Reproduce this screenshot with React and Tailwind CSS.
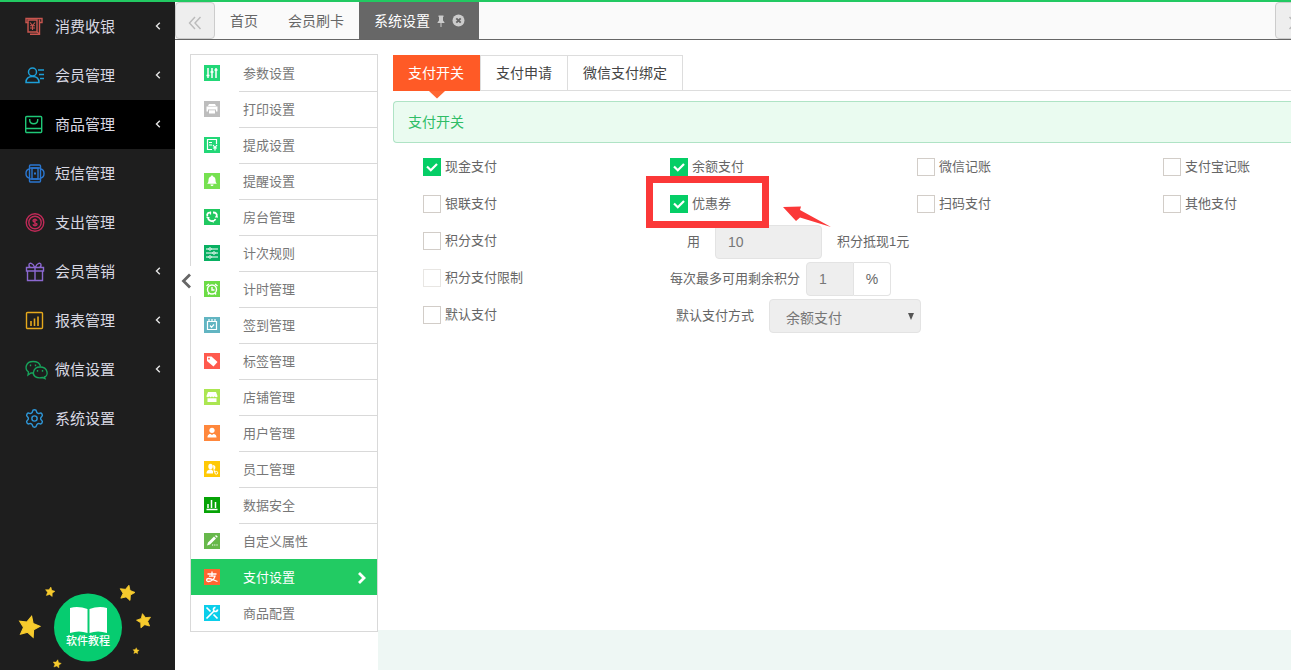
import React, { useState } from 'react';
import clsx from 'clsx';
import { Settings } from 'lucide-react';

const line = { fill: 'none', stroke: 'currentColor', strokeWidth: 1.4 };

const NAV_ITEMS = [
  {
    label: '消费收银',
    color: 'text-[#c9564f]',
    arrow: true,
    icon: (
      <g {...line}>
        <path d="M3.5 5.5H1v-4h16v4h-2" />
        <path d="M3 3h9v12H3zM14.5 2.500v14.800H5" />
        <path d="M12 15l2.500 2" />
        <path d="M5 5.500l2.500 3L10 5.500M7.500 8.500V13M5 8.800h5M5 11h5" strokeWidth="1.100" />
      </g>
    ),
  },
  {
    label: '会员管理',
    color: 'text-[#1d9fd8]',
    arrow: true,
    icon: (
      <g {...line} strokeWidth={1.5}>
        <circle cx="7.5" cy="6" r="4" />
        <path d="M1 16.5c0-4 2-6 6.5-6s6.500 2 6.500 6zM13 4h6M14 8.500h5M15 12.500h4" />
      </g>
    ),
  },
  {
    label: '商品管理',
    color: 'text-[#1fc777]',
    arrow: true,
    icon: (
      <g {...line}>
        <rect x="0.7" y="1.5" width="16" height="16" rx="1" />
        <path d="M1 13.5h16M4.700 4v1c0 5 8 5 8 0V4" />
      </g>
    ),
  },
  {
    label: '短信管理',
    color: 'text-[#2a76cf]',
    icon: (
      <g {...line}>
        <rect x="4.5" y="1" width="11" height="17" rx="1" />
        <rect x="7" y="4" width="6" height="11" />
        <path d="M5 4h10M5 15h10M4 5C0 6 0 13 4 14M16 5c4 1 4 8 0 9" />
        <path d="M10 8.5v2" strokeWidth="2" />
      </g>
    ),
  },
  {
    label: '支出管理',
    color: 'text-[#c02a58]',
    icon: (
      <g {...line}>
        <circle cx="10" cy="9.5" r="8.8" />
        <circle cx="10" cy="9.5" r="6.2" />
        <path d="M12 7.700c-.5-1.700-4-1.700-4 0s4 1.700 4 3.500-3.500 1.800-4 0M10 5.500v8" />
      </g>
    ),
  },
  {
    label: '会员营销',
    color: 'text-[#8b68d0]',
    arrow: true,
    icon: (
      <g {...line}>
        <path d="M1.500 5.500h17v3.500h-17zM2.500 9v9.500h15V9M10 5.500v13M9.500 5C8 1 4 0 4 3c0 1.500 1 2.500 2 2.500M10.500 5C12 1 16 0 16 3c0 1.500-1 2.500-2 2.500" />
      </g>
    ),
  },
  {
    label: '报表管理',
    color: 'text-[#e6a91c]',
    arrow: true,
    icon: (
      <g {...line}>
        <rect x="1.5" y="1.5" width="16" height="16" rx="1" />
        <path d="M6 10v5M9.500 7.500V15M13 5.500V15" strokeWidth="1.6" />
      </g>
    ),
  },
  {
    label: '微信设置',
    color: 'text-[#17a35b]',
    arrow: true,
    icon: (
      <g {...line}>
        <path d="M8 13H6l-3 2 .5-3C-1 8.500 1 1.500 8 1.500c4 0 7 2 7.500 5" />
        <path d="M15 7c8.500 0 8.500 9 4.500 10l.5 1.500-2.500-1C11 19 7.500 15.500 8.500 12c.6-3 3-5 6.500-5z" />
        <path d="M5.500 4.500v1.800M10.500 4.500v1.800M12.500 10v1.800M17.500 10v1.800" />
      </g>
    ),
  },
  {
    label: '系统设置',
    color: 'text-[#2e97d8]',
    icon: <Settings x={-1} y={-1} size={21} strokeWidth={1.6} />,
  },
];

const MENU_ITEMS = [
  {
    label: '参数设置',
    bg: 'bg-[#22d777]',
    icon: <path d="M4 3v10M8 3v10M12 3v10M2.500 10.500h3M6.500 7h3M10.500 5h3" stroke="#fff" strokeWidth="1.5" />,
  },
  {
    label: '打印设置',
    bg: 'bg-[#bdbdbd]',
    icon: (
      <g fill="#fff">
        <path d="M5 3h6l1 2H4zM2.500 5.500h11V10.500H12V8.500H4v2H2.500z" />
        <path d="M5 9.300h6V12.500H5z" />
      </g>
    ),
  },
  {
    label: '提成设置',
    bg: 'bg-[#22d777]',
    icon: (
      <g fill="none" stroke="#fff" strokeWidth="1.2">
        <path d="M12.500 7V2.500h-9v10H8M5 5.500h3M5 8h3M9 8l2 2.500L13 8M11 10v3.500M9 11h4" />
      </g>
    ),
  },
  {
    label: '提醒设置',
    bg: 'bg-[#76e150]',
    icon: <path d="M8 2.500c.8 0 1 .5 1 1 2 .5 2.500 2 2.500 3.500 0 2 .5 3 1.500 3.800H3C4 10 4.500 9 4.500 7c0-1.500.5-3 2.500-3.500 0-.5.2-1 1-1zM6.500 11.500h3c0 2-3 2-3 0z" fill="#fff" />,
  },
  {
    label: '房台管理',
    bg: 'bg-[#20c860]',
    icon: (
      <g fill="none" stroke="#fff" strokeWidth="1.8">
        <path d="M7 4C4 3 2.500 5 3.500 7.500M4 9c1 3.500 6 4.500 7.500 1M12.500 8C13.500 5 12 3.500 9 3.500" />
        <path d="M6.500 2.500v3M2.500 8.500h3M11 8h3M8.500 11.500l1 2" strokeWidth="1.2" />
      </g>
    ),
  },
  {
    label: '计次规则',
    bg: 'bg-[#08b062]',
    icon: (
      <g stroke="#fff" fill="#08b062">
        <path d="M2 4h12M2 8h12M2 12h12" />
        <circle cx="6" cy="4" r="1.2" />
        <circle cx="10" cy="8" r="1.2" />
        <circle cx="6" cy="12" r="1.2" />
      </g>
    ),
  },
  {
    label: '计时管理',
    bg: 'bg-[#6cdc46]',
    icon: (
      <g fill="none" stroke="#fff" strokeWidth="1.4">
        <circle cx="8" cy="8.5" r="4.5" />
        <path d="M8 6v3h2.500M2.500 5l2.500-2M13.500 5L11 3M5 12l-1 1.500M11 12l1 1.500" />
      </g>
    ),
  },
  {
    label: '签到管理',
    bg: 'bg-[#62b5c2]',
    icon: (
      <g fill="none" stroke="#fff" strokeWidth="1.2">
        <path d="M3.500 4.500h9v8h-9zM3 4.500h10M5 2v3M8 2v3M11 2v3M6 8.500l1.500 1.800L10 7.500" />
      </g>
    ),
  },
  {
    label: '标签管理',
    bg: 'bg-[#ff5a4e]',
    icon: <path fillRule="evenodd" d="M3 3.500h4.500l6 5.500-4 4.500L3 8zM5 4.800a.9.9 0 100 1.800.9.9 0 000-1.800z" fill="#fff" />,
  },
  {
    label: '店铺管理',
    bg: 'bg-[#abe651]',
    icon: <path d="M4 3h8l1.500 4c0 1.500-2 1.500-2.800.3-.7 1.200-2 1.200-2.700 0-.7 1.200-2 1.200-2.700 0C4.500 8.500 2.500 8.500 2.500 7zM3.500 9.300h9V13h-9z" fill="#fff" />,
  },
  {
    label: '用户管理',
    bg: 'bg-[#ff873c]',
    icon: (
      <g fill="#fff">
        <circle cx="8" cy="5.3" r="2.6" />
        <path d="M3.500 12.500c0-3 2-3.500 3-3.500l1.500 1L9.500 9c1 0 3 .5 3 3.500z" />
      </g>
    ),
  },
  {
    label: '员工管理',
    bg: 'bg-[#ffc905]',
    icon: (
      <g fill="#fff">
        <ellipse cx="6.5" cy="5.5" rx="2.2" ry="2.8" />
        <path d="M2.500 12.500c0-3 2-3.500 3-4h2l1.500 1.500v2.500zM9 4c3 0 3 4 1 5l1.500 1-1.500 2" />
        <circle cx="12.3" cy="11.8" r="1.4" fill="none" stroke="#fff" />
      </g>
    ),
  },
  {
    label: '数据安全',
    bg: 'bg-[#06a306]',
    icon: <path d="M4 7v4M7.500 3v8M11.500 5v6M2.500 12.500h11" stroke="#fff" strokeWidth="1.5" />,
  },
  {
    label: '自定义属性',
    bg: 'bg-[#67b84b]',
    icon: <path d="M3 12.500l1-3 6-6 2 2-6 6zM11 3l1-1 1.800 1.800-1 1zM8 11.500h1.200v1H8zM10.200 11.500h1.200v1h-1.200zM12.400 11.500h1.200v1h-1.200z" fill="#fff" />,
  },
  {
    label: '支付设置',
    bg: 'bg-[#ff6631]',
    icon: <path d="M3.500 5h9M8 2.500V7M5 7.200h6C10 10.500 7 12.500 4.500 12.500c-2.500 0-2.500-3 0-3 3 0 6 2 9 3" fill="none" stroke="#fff" strokeWidth="1.3" />,
  },
  {
    label: '商品配置',
    bg: 'bg-[#0bceea]',
    icon: (
      <g fill="none" stroke="#fff" strokeWidth="1.7">
        <path d="M2.500 2.500l4 4M9.500 9.500l4 4M2.500 13.500l7.500-7.500" />
        <path d="M11.500 2.300c-2 .4-2.500 2-1.500 3.700 1.500 1 3.400.5 3.700-1.500" />
      </g>
    ),
  },
];

const SETTING_TABS = ['支付开关', '支付申请', '微信支付绑定'];

const STARS = [
  { x: 29, y: 57, size: 11, turn: 14 },
  { x: 50, y: 22, size: 5, turn: 10 },
  { x: 127, y: 23, size: 8, turn: 14 },
  { x: 144, y: 51, size: 7.5, turn: -12 },
  { x: 136, y: 81, size: 3.3, turn: 5 },
  { x: 57, y: 94, size: 4.3, turn: 10 },
];

const Star = ({ x, y, size, turn }) => (
  <path
    transform={`translate(${x} ${y}) rotate(${turn}) scale(${size})`}
    d="M0-1l.29.6.66.09-.48.46.12.66L0 .5l-.59.31.12-.66-.48-.46.66-.09z"
    fill="#f7cb2d"
    stroke="#f7cb2d"
    strokeWidth="0.1"
  />
);

const TutorialBadge = () => (
  <svg viewBox="0 0 175 100" className="block w-full" role="img" aria-label="软件教程">
    <circle cx="88" cy="57.5" r="34" fill="#06cc70" />
    <path d="M70 38c6-2 12-1 17.500 1v24C82 61 76 61 70 63zM107 38c-6-2-12-1-17.500 1v24c5.500-2 11.500-2 17.500 0z" fill="#fff" />
    <text x="88" y="75" textAnchor="middle" fontSize="11" fontWeight="500" fill="#fff">软件教程</text>
    {STARS.map((star) => (
      <Star key={star.x} {...star} />
    ))}
  </svg>
);

const Sidebar = () => (
  <aside className="flex w-[175px] shrink-0 flex-col overflow-hidden bg-[#1e1e1e]">
    <nav>
      {NAV_ITEMS.map(({ label, color, arrow, icon }) => (
        <a
          key={label}
          href="#"
          className={clsx(
            'flex h-[49px] items-center pr-3.5 pl-[25px] text-[15px] text-[#d8d8e2]',
            label === '商品管理' && 'bg-black'
          )}
        >
          <svg viewBox="0 0 24 20" className={clsx('mr-1.5 h-5 w-6 shrink-0 overflow-visible', color)}>
            {icon}
          </svg>
          <span className="pt-0.5">{label}</span>
          {arrow && (
            <svg viewBox="0 0 6 8" className="mb-0.5 ml-auto h-2 w-1.5">
              <path d="M4.800 .8L1.500 4l3.300 3.200" fill="none" stroke="#e4e4e4" strokeWidth="1.4" />
            </svg>
          )}
        </a>
      ))}
    </nav>
    <div className="mt-auto">
      <TutorialBadge />
    </div>
  </aside>
);

const PageTabs = () => (
  <div className="flex h-[38px] overflow-hidden border-b border-[#666] bg-[#fafafa] text-sm text-[#666]">
    <button type="button" aria-label="向左" className="flex w-10 shrink-0 items-center justify-center rounded-sm border border-[#ccc] bg-[#eee]">
      <svg viewBox="0 0 14 14" className="mt-1 h-3.5 w-3.5">
        <path d="M7 1L1.500 7 7 13M12.500 1L7 7l5.500 6" fill="none" stroke="#bbb" strokeWidth="1.4" />
      </svg>
    </button>
    <a href="#" className="flex items-center px-[15px]">首页</a>
    <a href="#" className="flex items-center px-[15px]">会员刷卡</a>
    <div className="flex items-center bg-[#676767] pr-3.5 pl-[15px] text-white">
      <a href="#">系统设置</a>
      <button type="button" aria-label="固定" className="ml-1.5">
        <svg viewBox="0 0 10 14" className="h-3.5 w-2.5">
          <path d="M2.500 1.500h5V3H7v3.500l1.500 2V9H5.500v4h-1V9h-3v-.5L3 6.500V3h-.5z" fill="#ccc" />
        </svg>
      </button>
      <button type="button" aria-label="关闭" className="ml-1.5">
        <svg viewBox="0 0 13 13" className="h-[13px] w-[13px]">
          <circle cx="6.5" cy="6.5" r="6" fill="#ccc" />
          <path d="M4.300 4.300l4.400 4.400M8.700 4.300L4.300 8.700" stroke="#666" strokeWidth="1.9" />
        </svg>
      </button>
    </div>
    <button type="button" aria-label="向右" className="-mr-6 ml-auto flex w-10 shrink-0 items-center justify-center rounded-sm border border-[#ccc] bg-[#eee]">
      <svg viewBox="0 0 14 14" className="mt-1 h-3.5 w-3.5">
        <path d="M1.500 1L7 7l-5.500 6M7 1l5.500 6L7 13" fill="none" stroke="#bbb" strokeWidth="1.4" />
      </svg>
    </button>
  </div>
);

const SettingsMenu = () => (
  <nav className="relative w-[188px] border border-[#d9d9d9] bg-white">
    {MENU_ITEMS.map(({ label, bg, icon }, index) => {
      const active = label === '支付设置';
      const divided = index > 0 && index < 14;
      return (
        <a
          key={label}
          href="#"
          className={clsx(
            'flex h-9 items-center pl-[13px] text-[13px]',
            active ? 'bg-[#22cb63] text-white' : 'text-[#777]'
          )}
        >
          <svg viewBox="0 0 16 16" className={clsx('h-4 w-4 shrink-0', bg)}>
            {icon}
          </svg>
          <span
            className={clsx(
              'ml-[19px] flex h-full flex-1 items-center border-t pl-1',
              divided ? 'border-[#d9d9d9]' : 'border-transparent'
            )}
          >
            {label}
            {active && (
              <svg viewBox="0 0 10 12" className="mr-2.5 ml-auto h-3 w-2.5">
                <path d="M2 1l5 5-5 5" fill="none" stroke="#fff" strokeWidth="2.8" />
              </svg>
            )}
          </span>
        </a>
      );
    })}
    <button type="button" aria-label="收起菜单" className="absolute top-[211px] -left-2.5 flex h-[30px] w-3 items-center bg-white">
      <svg viewBox="0 0 11 16" className="h-4 w-[11px]">
        <path d="M9 1.500L2.500 8 9 14.500" fill="none" stroke="#666" strokeWidth="2.8" />
      </svg>
    </button>
  </nav>
);

const Checkbox = ({ label, defaultChecked = false, disabled = false }) => {
  const [checked, setChecked] = useState(defaultChecked);

  return (
    <label className="mb-0.5 flex items-center gap-1">
      <span className="relative h-[18px] w-[18px]">
        <input
          type="checkbox"
          checked={checked}
          disabled={disabled}
          onChange={(e) => setChecked(e.target.checked)}
          className="block h-[18px] w-[18px] appearance-none border border-[#d2cdc8] bg-white checked:border-[#05ce66] checked:bg-[#05ce66] disabled:border-[#e8e6e3]"
        />
        {checked && (
          <svg viewBox="0 0 18 18" className="pointer-events-none absolute inset-0">
            <path d="M4 8.500l3.800 3.800L14 6" fill="none" stroke="#fff" strokeWidth="2.2" />
          </svg>
        )}
      </span>
      <span>{label}</span>
    </label>
  );
};

// 红框与箭头,标出优惠券开关
const CouponMark = () => (
  <>
    <div className="pointer-events-none absolute -top-[18px] -left-6 h-[52px] w-[123px] border-[7px] border-[#fb3838]" />
    <svg viewBox="0 0 50 24" className="pointer-events-none absolute top-2.5 left-[112px] h-6 w-[50px]">
      <path d="M1 3l18-.5-1 3.500 31 17-31-9.500-4 3.500z" fill="#fb3838" />
    </svg>
  </>
);

const PaymentForm = () => (
  <form className="grid auto-rows-[37px] grid-cols-[247fr_247fr_246fr_128fr] items-center pt-1.5 pl-[30px] text-[13px] whitespace-nowrap text-[#666]">
    <Checkbox label="现金支付" defaultChecked />
    <Checkbox label="余额支付" defaultChecked />
    <Checkbox label="微信记账" />
    <Checkbox label="支付宝记账" />

    <Checkbox label="银联支付" />
    <div className="relative z-10">
      <Checkbox label="优惠券" defaultChecked />
      <CouponMark />
    </div>
    <Checkbox label="扫码支付" />
    <Checkbox label="其他支付" />

    <Checkbox label="积分支付" />
    <div className="col-span-3 flex items-center pl-[17px]">
      <label htmlFor="points">用</label>
      <input
        id="points"
        disabled
        defaultValue="10"
        className="mr-[15px] ml-[15px] h-[34px] w-[107px] rounded-sm border border-[#e3e3e3] bg-[#eee] px-3 text-sm text-[#777]"
      />
      <span>积分抵现1元</span>
    </div>

    <Checkbox label="积分支付限制" disabled />
    <div className="col-span-3 flex items-center">
      <label htmlFor="limit">每次最多可用剩余积分</label>
      <input
        id="limit"
        disabled
        defaultValue="1"
        className="ml-1.5 h-[34px] w-12 rounded-l-sm border border-[#e3e3e3] bg-[#eee] px-3 text-sm text-[#777]"
      />
      <span className="flex h-[34px] w-[37px] items-center justify-center rounded-r-sm border border-l-0 border-[#e3e3e3] text-sm">%</span>
    </div>

    <Checkbox label="默认支付" />
    <div className="col-span-3 flex items-center pl-1.5">
      <label htmlFor="method">默认支付方式</label>
      <div className="relative ml-[15px]">
        <select
          id="method"
          disabled
          className="block h-[34px] w-[152px] appearance-none rounded-sm border border-[#e3e3e3] bg-[#eee] pt-1 pl-4 text-sm text-[#777] opacity-100"
        >
          <option>余额支付</option>
        </select>
        <svg viewBox="0 0 6 7" className="pointer-events-none absolute top-3.5 right-[7px] h-[7px] w-1.5">
          <path d="M0 0h6L3 7z" fill="#555" />
        </svg>
      </div>
    </div>
  </form>
);

const PaymentPanel = () => {
  const [tab, setTab] = useState(SETTING_TABS[0]);

  return (
    <section className="flex-1 pt-[15px] pl-[15px]">
      <div className="flex h-9 border-b border-[#ddd] text-sm text-[#444]" role="tablist">
        {SETTING_TABS.map((name, index) => (
          <button
            key={name}
            type="button"
            role="tab"
            aria-selected={tab === name}
            onClick={() => setTab(name)}
            className={clsx(
              'relative h-9 px-[15px]',
              tab === name ? 'bg-[#ff5a26] pr-4 text-white' : 'border-t border-r border-b border-[#ddd]',
              tab !== name && index === 1 && 'border-l'
            )}
          >
            {name}
            {tab === name && (
              <svg viewBox="0 0 16 8" className="absolute top-full left-9 h-2 w-4">
                <path d="M0 0h16L8 7.500z" fill="#ff6631" />
              </svg>
            )}
          </button>
        ))}
      </div>
      <h2 className="mt-2.5 flex h-[42px] items-center rounded-l-sm border border-r-0 border-[#afe3c5] bg-[#eafbf0] pl-3.5 text-sm text-[#2fbd67]">
        支付开关
      </h2>
      <PaymentForm />
    </section>
  );
};

const App = () => (
  <div className="flex min-h-screen flex-col overflow-hidden border-t-2 border-[#22c962] bg-white font-['Liberation_Sans','Noto_Sans_CJK_SC',sans-serif]">
    <div className="flex flex-1">
      <Sidebar />
      <main className="flex min-w-0 flex-1 flex-col">
        <PageTabs />
        <div className="flex flex-1">
          <div className="shrink-0 pt-3.5 pl-[15px]">
            <SettingsMenu />
          </div>
          <div className="flex min-w-0 flex-1 flex-col">
            <PaymentPanel />
            <footer className="h-10 bg-[#eef7f4]" />
          </div>
        </div>
      </main>
    </div>
  </div>
);

export default App;
